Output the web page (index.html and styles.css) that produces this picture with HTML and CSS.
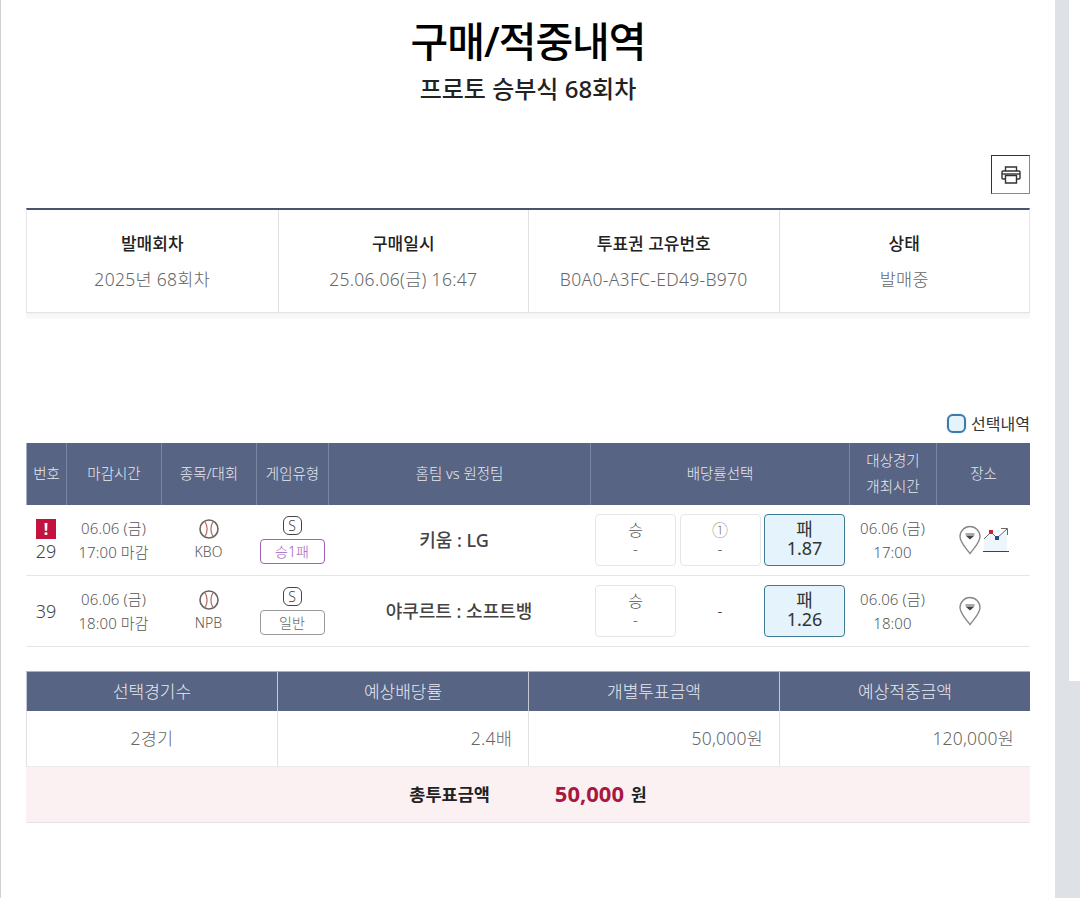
FILE: index.html
```html
<!DOCTYPE html>
<html lang="ko">
<head>
    <meta charset="UTF-8">
    <meta name="viewport" content="width=device-width, initial-scale=1.0">
    <title>구매/적중내역</title>
    <link rel="stylesheet" href="styles.css">
</head>
<body>
    <div class="page">
        <h1 class="title">구매/적중내역</h1>
        <h2 class="subtitle">프로토 승부식 68회차</h2>

        <div class="print-row">
            <button class="print-btn" aria-label="인쇄">
                <svg width="20" height="18" viewBox="0 0 20 18" fill="none" stroke="#333" stroke-width="1.4">
                    <path d="M4.500 5V1h11v4"/>
                    <path d="M4.500 13H2a1 1 0 0 1-1-1V6a1 1 0 0 1 1-1h16a1 1 0 0 1 1 1v6a1 1 0 0 1-1 1h-2.500"/>
                    <path d="M4.500 9.500h11V17h-11z"/>
                    <path d="M1 8h18"/>
                </svg>
            </button>
        </div>

        <div class="info-table">
            <div class="info-cell">
                <strong>발매회차</strong>
                <span>2025년 68회차</span>
            </div>
            <div class="info-cell">
                <strong>구매일시</strong>
                <span>25.06.06(금) 16:47</span>
            </div>
            <div class="info-cell">
                <strong>투표권 고유번호</strong>
                <span>B0A0-A3FC-ED49-B970</span>
            </div>
            <div class="info-cell">
                <strong>상태</strong>
                <span>발매중</span>
            </div>
        </div>
        <div class="info-shadow"></div>

        <div class="legend">
            <i class="legend-box"></i>
            <span>선택내역</span>
        </div>

        <div class="games">
            <div class="games-row games-head">
                <div>번호</div>
                <div>마감시간</div>
                <div>종목/대회</div>
                <div>게임유형</div>
                <div>홈팀 vs 원정팀</div>
                <div>배당률선택</div>
                <div>대상경기<br>개최시간</div>
                <div>장소</div>
            </div>

            <div class="games-row game">
                <div class="no">
                    <i class="alert">!</i>
                    <span>29</span>
                </div>
                <div class="time">06.06 (금)<br>17:00 마감</div>
                <div class="sport">
                    <svg class="ball" width="20" height="20" viewBox="0 0 20 20">
                        <circle cx="10" cy="10" r="9" fill="#fff" stroke="#6b6461" stroke-width="1.600"/>
                        <path d="M6 2.500c2.500 4.500 2.500 10.500 0 15M14 2.500c-2.500 4.500-2.500 10.500 0 15" fill="none" stroke="#b9726f" stroke-width="1.300"/>
                    </svg>
                    <span>KBO</span>
                </div>
                <div class="type">
                    <i class="s-badge">S</i>
                    <span class="type-tag handicap">승1패</span>
                </div>
                <div class="teams short">키움 : LG</div>
                <div class="odds">
                    <div class="odd"><span class="odd-name">승</span><span>-</span></div>
                    <div class="odd"><span class="odd-name draw">①</span><span>-</span></div>
                    <div class="odd picked"><span>패</span><span>1.87</span></div>
                </div>
                <div class="time">06.06 (금)<br>17:00</div>
                <div class="place">
                    <svg width="24" height="30" viewBox="0 0 24 30" fill="none">
                        <path d="M12 28.500C8 23 2 17.500 2 11.500a10 10 0 0 1 20 0c0 6-6 11.500-10 17z" stroke="#888" stroke-width="1.400"/>
                        <path d="M7.500 9h9" stroke="#555" stroke-width="1"/>
                        <path d="M7.500 10.500h9L12 14.500z" fill="#444"/>
                    </svg>
                    <svg width="26" height="26" viewBox="0 0 26 26" fill="none">
                        <path d="M1 13l7-8 6 6 10-8v21H1z" fill="#eef5fb"/>
                        <path d="M1 12l7-7 6 6 10-9" stroke="#666" stroke-width="1"/>
                        <path d="M18 1.500h6.500V8" stroke="#666" stroke-width="1"/>
                        <rect x="6" y="3" width="4" height="4" fill="#c8202f"/>
                        <rect x="12" y="9" width="4" height="4" fill="#1c4f94"/>
                        <path d="M0 24.500h26" stroke="#444" stroke-width="1"/>
                    </svg>
                </div>
            </div>

            <div class="games-row game">
                <div class="no"><span>39</span></div>
                <div class="time">06.06 (금)<br>18:00 마감</div>
                <div class="sport">
                    <svg class="ball" width="20" height="20" viewBox="0 0 20 20">
                        <circle cx="10" cy="10" r="9" fill="#fff" stroke="#6b6461" stroke-width="1.600"/>
                        <path d="M6 2.500c2.500 4.500 2.500 10.500 0 15M14 2.500c-2.500 4.500-2.500 10.500 0 15" fill="none" stroke="#b9726f" stroke-width="1.300"/>
                    </svg>
                    <span>NPB</span>
                </div>
                <div class="type">
                    <i class="s-badge">S</i>
                    <span class="type-tag">일반</span>
                </div>
                <div class="teams">야쿠르트 : 소프트뱅</div>
                <div class="odds">
                    <div class="odd"><span class="odd-name">승</span><span>-</span></div>
                    <div class="odd empty"><span>-</span></div>
                    <div class="odd picked"><span>패</span><span>1.26</span></div>
                </div>
                <div class="time">06.06 (금)<br>18:00</div>
                <div class="place">
                    <svg width="24" height="30" viewBox="0 0 24 30" fill="none">
                        <path d="M12 28.500C8 23 2 17.500 2 11.500a10 10 0 0 1 20 0c0 6-6 11.500-10 17z" stroke="#888" stroke-width="1.400"/>
                        <path d="M7.500 9h9" stroke="#555" stroke-width="1"/>
                        <path d="M7.500 10.500h9L12 14.500z" fill="#444"/>
                    </svg>
                    <i class="place-gap"></i>
                </div>
            </div>
        </div>

        <div class="summary">
            <div class="summary-head">선택경기수</div>
            <div class="summary-head">예상배당률</div>
            <div class="summary-head">개별투표금액</div>
            <div class="summary-head">예상적중금액</div>
            <div class="summary-cell center">2경기</div>
            <div class="summary-cell">2.4배</div>
            <div class="summary-cell">50,000원</div>
            <div class="summary-cell">120,000원</div>
            <div class="summary-total">
                <strong>총투표금액</strong>
                <b class="amount">50,000</b>
                <strong class="won">원</strong>
            </div>
        </div>
    </div>

    <div class="side-panel"></div>
</body>
</html>
```

FILE: styles.css
```css
* {
    box-sizing: border-box;
}
html, body {
    height: 100%;
}
body {
    margin: 0;
    height: 898px;
    overflow: hidden;
    background-color: #dee1e6;
    color: #666;
    font-family: "Noto Sans", "Noto Sans CJK KR", sans-serif;
    display: flex;
    align-items: stretch;
}
.page {
    width: 1055px;
    flex: none;
    background-color: #fff;
    border-left: 1px solid #d2d2d2;
    padding: 0 25px 0 25px;
}
.side-panel {
    width: 11px;
    height: 681px;
    margin-left: 14px;
    flex: none;
    background-color: #fff;
}
.title {
    margin: 13px 0 0;
    font-size: 41px;
    line-height: 56px;
    font-weight: 500;
    color: #000;
    text-align: center;
    letter-spacing: -1px;
}
.subtitle {
    margin: 2px 0 0;
    font-size: 24px;
    line-height: 36px;
    font-weight: 500;
    color: #222;
    text-align: center;
    letter-spacing: 0;
}
.print-row {
    display: flex;
    justify-content: flex-end;
    margin-top: 48px;
}
.print-btn {
    width: 39px;
    height: 39px;
    padding: 0;
    background: #fff;
    border: 1px solid #333;
    border-bottom-color: #888;
    border-right-color: #888;
    display: flex;
    align-items: center;
    justify-content: center;
}
.info-table {
    margin-top: 14px;
    height: 105px;
    display: grid;
    grid-template-columns: repeat(4, 1fr);
    border-top: 2px solid #47566a;
    border-bottom: 1px solid #e4e4e6;
    border-left: 1px solid #e4e4e6;
    border-right: 1px solid #e4e4e6;
}
.info-cell {
    display: flex;
    flex-direction: column;
    align-items: center;
    padding-top: 21px;
    border-left: 1px solid #e1e1e4;
    font-size: 17px;
}
.info-cell:first-child {
    border-left: none;
}
.info-cell strong {
    font-weight: 500;
    color: #222;
    line-height: 26px;
}
.info-cell span {
    margin-top: 9px;
    font-size: 17.500px;
    font-weight: 300;
    color: #666;
    line-height: 26px;
    letter-spacing: 0.300px;
}
.info-shadow {
    height: 6px;
    background: linear-gradient(#f4f4f4, #fbfbfb);
}
.legend {
    margin-top: 93px;
    height: 22px;
    display: flex;
    justify-content: flex-end;
    align-items: center;
    gap: 5px;
    font-size: 16px;
    font-weight: 400;
    color: #333;
}
.legend-box {
    width: 19px;
    height: 19px;
    border: 2px solid #3f7aa6;
    border-radius: 6px;
    background-color: #e4f3fc;
    box-shadow: 0 0 2px #a9d3ea;
}
.games {
    margin-top: 9px;
}
.games-row {
    display: grid;
    grid-template-columns: 40px 95px 95px 72px 262px 259px 87px 94px;
}
.games-head {
    height: 62px;
    background-color: #586484;
    color: #e8eaf0;
    font-size: 14.500px;
    font-weight: 300;
}
.games-head > div {
    display: flex;
    align-items: center;
    justify-content: center;
    text-align: center;
    line-height: 26px;
    padding-bottom: 3px;
    border-left: 1px solid #7a86a2;
}
.games-head > div:first-child {
    border-left: 1px solid #a8b0c4;
}
.game {
    height: 71px;
    border-bottom: 1px solid #e6e6e8;
    font-size: 14px;
    font-weight: 300;
    color: #555;
}
.game > div {
    display: flex;
    flex-direction: column;
    align-items: center;
    justify-content: center;
    text-align: center;
}
.no {
    font-size: 18px;
    color: #444;
}
.no span {
    line-height: 24px;
}
.alert {
    width: 20px;
    height: 20px;
    margin-top: 1px;
    background-color: #c3123e;
    color: #fff;
    font-style: normal;
    font-weight: 700;
    font-size: 16px;
    line-height: 20px;
}
.time {
    font-size: 15px;
    line-height: 24px;
    letter-spacing: 0.100px;
}
.game > .sport {
    padding-top: 1px;
}
.sport span {
    margin-top: 3px;
    line-height: 20px;
}
.s-badge {
    width: 19px;
    height: 19px;
    border: 1px solid #444;
    border-radius: 6px;
    font-style: normal;
    font-size: 14px;
    font-weight: 300;
    line-height: 17px;
    color: #444;
}
.type-tag {
    margin-top: 4px;
    width: 65px;
    height: 25px;
    border: 1px solid #999;
    border-radius: 4px;
    line-height: 23px;
    color: #666;
}
.type-tag.handicap {
    border-color: #a261b8;
    color: #a25cba;
}
.teams {
    font-size: 18px;
    font-weight: 500;
    color: #444;
    padding-bottom: 3px;
}
.game > .teams.short {
    padding-right: 10px;
}
.game > .odds {
    flex-direction: row;
    gap: 3.500px;
    padding-left: 1px;
    align-items: center;
    justify-content: center;
}
.odd {
    width: 81px;
    height: 52px;
    padding-bottom: 2px;
    border: 1px solid #e6e6e6;
    border-radius: 4px;
    display: flex;
    flex-direction: column;
    align-items: center;
    justify-content: center;
    font-size: 15px;
    line-height: 18px;
    color: #555;
}
.odd-name {
    font-size: 16px;
}
.odd-name.draw {
    color: #888;
}
.odd.empty {
    border-color: transparent;
    color: #222;
}
.odd.picked {
    background-color: #e4f3fc;
    border-color: #3f7a94;
    color: #333;
    font-size: 18px;
    font-weight: 400;
    line-height: 19px;
}
.game > .place {
    flex-direction: row;
    gap: 1px;
}
.place-gap {
    width: 26px;
}
.summary {
    margin-top: 24px;
    display: grid;
    grid-template-columns: repeat(4, 1fr);
}
.summary-head {
    height: 40px;
    padding-bottom: 2px;
    background-color: #586484;
    border-top: 1px solid #a8b0c4;
    border-left: 1px solid #c4c9d6;
    color: #e8eaf0;
    font-size: 17px;
    font-weight: 300;
    display: flex;
    align-items: center;
    justify-content: center;
}
.summary-cell {
    height: 55px;
    border-left: 1px solid #e1e1e4;
    font-size: 17.500px;
    font-weight: 300;
    letter-spacing: 0.200px;
    color: #666;
    display: flex;
    align-items: center;
    justify-content: flex-end;
    padding: 0 16px 3px 0;
}
.summary-cell.center {
    justify-content: center;
    padding-right: 0;
}
.summary-total {
    grid-column: 1 / -1;
    height: 57px;
    padding-bottom: 3px;
    background-color: #fbf1f3;
    border-top: 1px solid #eceaea;
    border-bottom: 1px solid #e6e3e5;
    display: flex;
    align-items: center;
    justify-content: center;
    font-size: 17.500px;
    color: #222;
}
.summary-total strong {
    font-weight: 700;
}
.amount {
    margin-left: 65px;
    font-size: 22px;
    font-weight: 700;
    color: #a9183f;
}
.won {
    margin-left: 7px;
    font-size: 17px;
}
```
